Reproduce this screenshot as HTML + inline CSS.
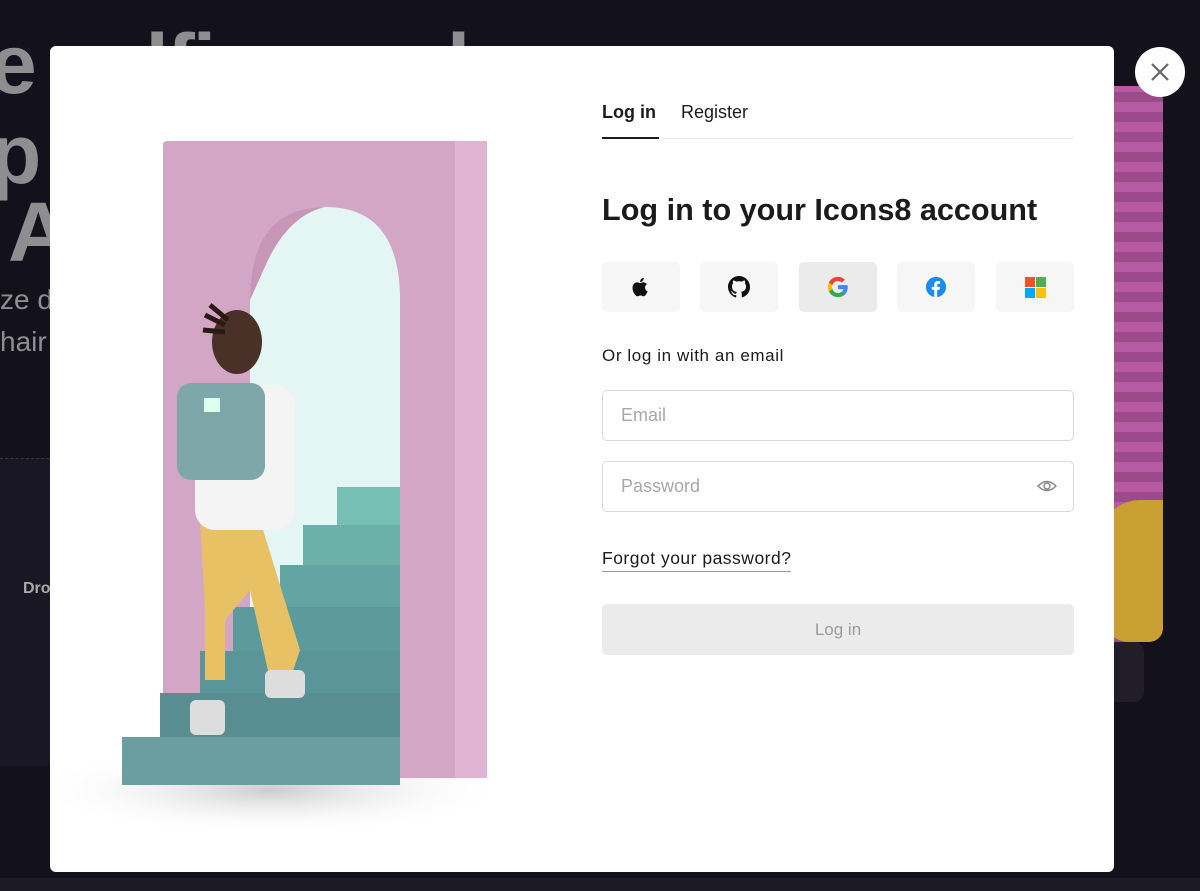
<!DOCTYPE html>
<html><head><meta charset="utf-8"><style>
*{box-sizing:border-box;margin:0;padding:0}
body{width:1200px;height:891px;overflow:hidden;background:#13111b;font-family:"Liberation Sans",sans-serif;position:relative}
.bgt{position:absolute;color:#8e8e90;font-weight:700;font-size:84px;line-height:1;letter-spacing:-2px}
.bgs{position:absolute;color:#8e8e90;font-size:28px}
.modal{position:absolute;left:50px;top:46px;width:1064px;height:826px;background:#fff;border-radius:6px}
.close{position:absolute;left:1135px;top:47px;width:50px;height:50px;border-radius:50%;background:#fff}
.r{position:absolute;color:#1b1b1b}
.tab{position:absolute;top:102px;font-size:18px}
.sb{position:absolute;top:262px;width:78px;height:50px;border-radius:5px;background:#f6f6f6;display:flex;align-items:center;justify-content:center}
.inp{position:absolute;left:602px;width:472px;height:51px;border:1px solid #d9d9d9;border-radius:5px;font-size:18px;color:#a8a8a8;padding:14px 18px}
</style></head><body>
<div class="bgt" style="left:-10px;top:22px">e selfies and</div>
<div class="bgt" style="left:-10px;top:112px">p</div>
<div class="bgt" style="left:8px;top:190px">A</div>
<div class="bgs" style="left:0;top:284px">ze d</div>
<div class="bgs" style="left:0;top:326px">hair</div>
<div style="position:absolute;left:0;top:458px;width:60px;height:308px;background:#1a1724;border-top:1px dashed #3a3744"></div>
<div style="position:absolute;left:23px;top:580px;color:#aaa;font-size:16px;font-weight:700">Dro</div>
<div style="position:absolute;left:1100px;top:86px;width:63px;height:556px;background:repeating-linear-gradient(0deg,#9b4a8c 0 10px,#b55aa3 10px 20px);border-radius:0 14px 14px 0"></div>
<div style="position:absolute;left:1100px;top:500px;width:63px;height:142px;background:#c9a032;border-radius:40px 0 14px 30px"></div>
<div style="position:absolute;left:1100px;top:642px;width:44px;height:60px;background:#211e29;border-radius:0 10px 10px 0"></div>
<div style="position:absolute;left:0;top:878px;width:1200px;height:13px;background:#1c1a24"></div>

<div class="modal"></div>
<div class="close"><svg width="50" height="50"><path d="M17 17L33 33M33 17L17 33" stroke="#666" stroke-width="2.2" fill="none"/></svg></div>

<svg style="position:absolute;left:60px;top:130px" width="480" height="720" viewBox="60 130 480 720">
<defs><radialGradient id="sh" cx="0.5" cy="0.5" r="0.5"><stop offset="0" stop-color="#ccc"/><stop offset="1" stop-color="#fff" stop-opacity="0"/></radialGradient></defs>
<ellipse cx="270" cy="790" rx="240" ry="45" fill="url(#sh)"/>
<path d="M163 145Q163 141 167 141H480Q487 141 487 148V778H163Z" fill="#d3a6c6"/>
<rect x="455" y="141" width="32" height="637" fill="#dfb5d3"/>
<path d="M250 700V300Q250 207 325 207Q400 207 400 300V700Z" fill="#e4f6f3"/>
<path d="M250 300Q250 207 325 207Q290 215 268 260Z" fill="#c695b8"/>
<g fill="#5d9a9d">
<rect x="337" y="487" width="63" height="40" fill="#76bfb5"/>
<rect x="303" y="525" width="97" height="42" fill="#6cb0aa"/>
<rect x="280" y="565" width="120" height="44" fill="#63a5a3"/>
<rect x="233" y="607" width="167" height="46"/>
<rect x="200" y="651" width="200" height="46" fill="#5a9599"/>
<rect x="160" y="693" width="240" height="48" fill="#588e92"/>
<rect x="122" y="737" width="278" height="48" fill="#6a9ea1"/>
</g>
<path d="M200 520h60l40 130l-10 30h-20l-20-90l-25 30v60h-20v-70z" fill="#e8c164"/>
<rect x="195" y="385" width="100" height="145" rx="20" fill="#f4f4f4"/>
<rect x="177" y="383" width="88" height="97" rx="14" fill="#7ea7aa"/>
<rect x="204" y="398" width="16" height="14" fill="#dfe"/>
<ellipse cx="237" cy="342" rx="25" ry="32" fill="#4a3128"/>
<path d="M205 315l20 10M210 305l18 15M203 330l22 2" stroke="#2a1a14" stroke-width="5"/>
<rect x="190" y="700" width="35" height="35" rx="6" fill="#ddd"/>
<rect x="265" y="670" width="40" height="28" rx="6" fill="#ddd"/>
</svg>

<div class="tab" style="left:602px;font-weight:700;color:#1b1b1b">Log in</div>
<div class="tab" style="left:681px;color:#1b1b1b">Register</div>
<div style="position:absolute;left:602px;top:138px;width:472px;height:1px;background:#ececec"></div>
<div style="position:absolute;left:602px;top:137px;width:57px;height:2px;background:#1b1b1b"></div>
<div class="r" style="left:602px;top:193px;font-size:30.6px;font-weight:700">Log in to your Icons8 account</div>

<div class="sb" style="left:602px"><svg width="22" height="22" viewBox="0 0 24 24"><path fill="#111" d="M16.4 12.6c0-2.4 2-3.6 2.1-3.7-1.2-1.7-3-1.9-3.6-2-1.5-.2-3 .9-3.8.9-.8 0-2-.9-3.3-.9-1.7 0-3.3 1-4.2 2.5-1.8 3.1-.5 7.7 1.3 10.2.9 1.2 1.9 2.6 3.2 2.5 1.3-.1 1.8-.8 3.3-.8s2 .8 3.3.8c1.4 0 2.3-1.2 3.1-2.5 1-1.4 1.4-2.8 1.4-2.9-.1 0-2.8-1-2.8-4.1zM13.9 5.2c.7-.8 1.2-2 1-3.2-1 0-2.2.7-2.9 1.5-.6.7-1.2 1.9-1 3 1.1.1 2.2-.5 2.9-1.3z"/></svg></div>
<div class="sb" style="left:700px"><svg width="22" height="22" viewBox="0 0 16 16"><path fill="#111" d="M8 0C3.6 0 0 3.6 0 8c0 3.5 2.3 6.5 5.5 7.6.4.1.5-.2.5-.4v-1.4c-2.2.5-2.7-1-2.7-1-.4-.9-.9-1.2-.9-1.2-.7-.5.1-.5.1-.5.8.1 1.2.8 1.2.8.7 1.3 1.9.9 2.3.7.1-.5.3-.9.5-1.1-1.8-.2-3.6-.9-3.6-4 0-.9.3-1.6.8-2.1-.1-.2-.4-1 .1-2.1 0 0 .7-.2 2.2.8.6-.2 1.3-.3 2-.3s1.4.1 2 .3c1.5-1 2.2-.8 2.2-.8.4 1.1.2 1.9.1 2.1.5.6.8 1.3.8 2.1 0 3.1-1.9 3.7-3.6 3.9.3.3.5.8.5 1.5v2.2c0 .2.1.5.6.4C13.7 14.5 16 11.5 16 8c0-4.4-3.6-8-8-8z"/></svg></div>
<div class="sb" style="left:799px;background:#ebebeb"><svg width="22" height="22" viewBox="0 0 24 24"><path fill="#4285F4" d="M22.6 12.3c0-.8-.1-1.5-.2-2.3H12v4.3h5.9c-.3 1.4-1 2.5-2.2 3.3v2.8h3.6c2.1-1.9 3.3-4.8 3.3-8.1z"/><path fill="#34A853" d="M12 23c3 0 5.5-1 7.3-2.7l-3.6-2.8c-1 .7-2.2 1.1-3.7 1.1-2.9 0-5.3-1.9-6.2-4.5H2.1v2.9C3.9 20.5 7.7 23 12 23z"/><path fill="#FBBC05" d="M5.8 14.1c-.2-.7-.4-1.4-.4-2.1s.1-1.4.4-2.1V7H2.1C1.4 8.5 1 10.2 1 12s.4 3.5 1.1 5l3.7-2.9z"/><path fill="#EA4335" d="M12 5.4c1.6 0 3.1.6 4.2 1.7l3.2-3.2C17.5 2.1 15 1 12 1 7.7 1 3.9 3.5 2.1 7l3.7 2.9c.9-2.6 3.3-4.5 6.2-4.5z"/></svg></div>
<div class="sb" style="left:897px"><svg width="22" height="22" viewBox="0 0 24 24"><circle cx="12" cy="12" r="11" fill="#1a8cf0"/><path fill="#fff" d="M13.3 23v-8h2.7l.4-3.2h-3.1V9.9c0-.9.3-1.5 1.6-1.5h1.6V5.6c-.3 0-1.3-.1-2.4-.1-2.4 0-4 1.4-4 4.1v2.3H7.4V15h2.7v8z"/></svg></div>
<div class="sb" style="left:996px"><svg width="21" height="21" viewBox="0 0 21 21"><rect width="10" height="10" fill="#f25022"/><rect x="11" width="10" height="10" fill="#4caf50"/><rect y="11" width="10" height="10" fill="#03a9f4"/><rect x="11" y="11" width="10" height="10" fill="#ffc107"/></svg></div>

<div class="r" style="left:602px;top:346px;font-size:17px;letter-spacing:0.6px">Or log in with an email</div>
<div class="inp" style="top:390px">Email</div>
<div class="inp" style="top:461px">Password</div>
<svg style="position:absolute;left:1036px;top:477px" width="22" height="18" viewBox="0 0 22 18"><path d="M2 9Q11 0 20 9Q11 18 2 9Z" fill="none" stroke="#888" stroke-width="1.4"/><circle cx="11" cy="9" r="3" fill="none" stroke="#888" stroke-width="1.4"/></svg>
<div class="r" style="left:602px;top:548px;font-size:17.5px;letter-spacing:0.5px;border-bottom:1px solid #999;padding-bottom:2px">Forgot your password?</div>
<div style="position:absolute;left:602px;top:604px;width:472px;height:51px;background:#ebebeb;border-radius:5px;color:#9c9c9c;font-size:17px;text-align:center;line-height:51px">Log in</div>
</body></html>
